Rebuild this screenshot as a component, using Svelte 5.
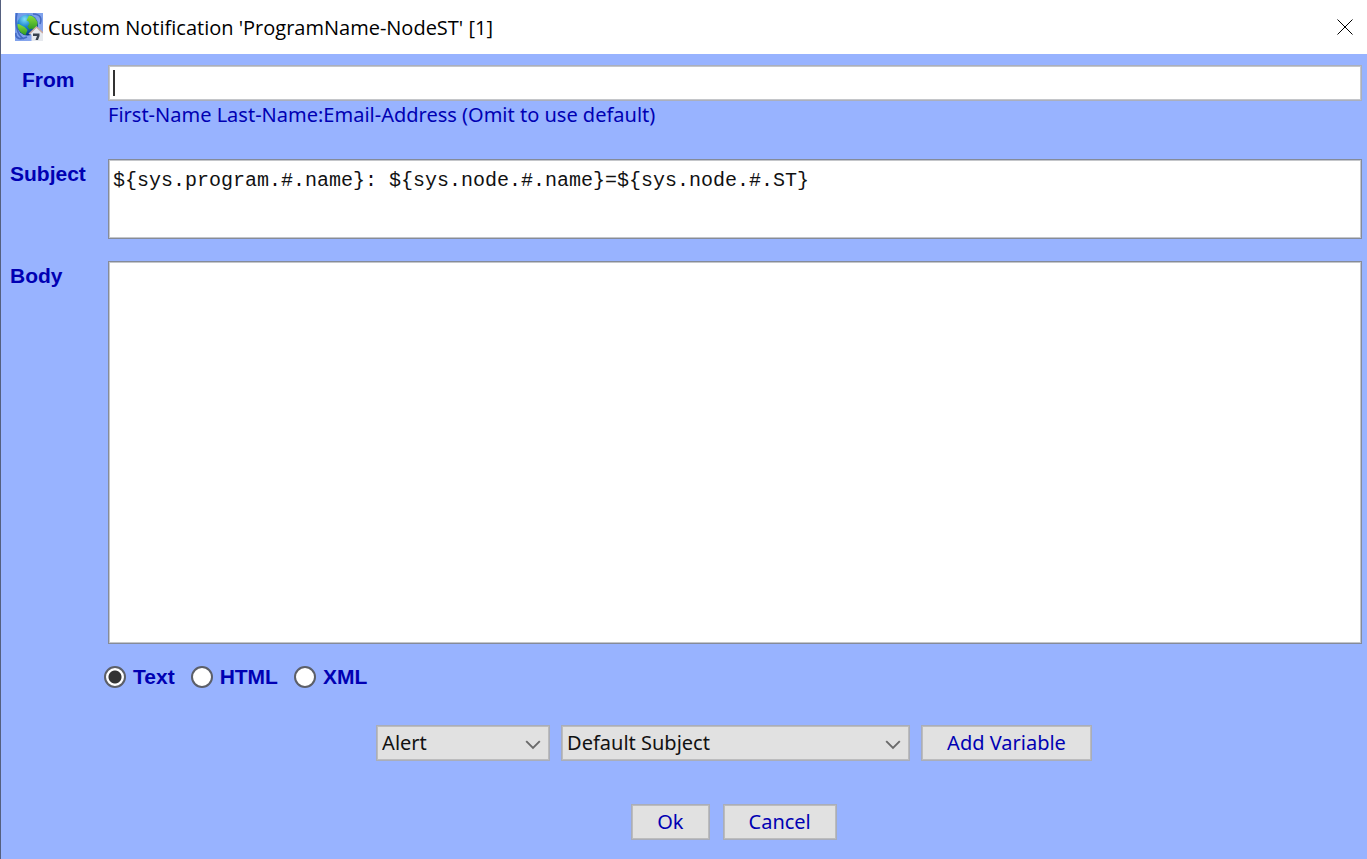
<script>
  let from = $state('');
  let subject = $state('${sys.program.#.name}: ${sys.node.#.name}=${sys.node.#.ST}');
  let body = $state('');
  let format = $state('Text');
  let category = $state('Alert');
  let variable = $state('Default Subject');
  const formats = ['Text', 'HTML', 'XML'];
</script>

{#snippet chevron()}
  <svg class="chevron" viewBox="0 0 16 10" aria-hidden="true">
    <path d="M1.2 1.2 8 8 14.8 1.2" fill="none" stroke="#6a6a6a" stroke-width="1.9" />
  </svg>
{/snippet}

<main class="window">
  <header class="titlebar">
    <svg class="app-icon" viewBox="0 0 28 28" aria-hidden="true">
      <defs>
        <linearGradient id="sky" x1="0" y1="0" x2="1" y2="1">
          <stop offset="0" stop-color="#6f9aea" />
          <stop offset="1" stop-color="#8fa9ee" />
        </linearGradient>
        <radialGradient id="sea" cx=".36" cy=".22" r=".8">
          <stop offset="0" stop-color="#7fe0f8" />
          <stop offset=".45" stop-color="#1c83cf" />
          <stop offset="1" stop-color="#06337c" />
        </radialGradient>
        <linearGradient id="land" x1="0" y1="0" x2="0" y2="1">
          <stop offset="0" stop-color="#8be03d" />
          <stop offset="1" stop-color="#2f9a22" />
        </linearGradient>
      </defs>
      <rect width="28" height="28" fill="url(#sky)" />
      <path d="M2 0C0 8 1 22 9 26M18 1c8 0 9 5 7 10M1 20c-1 6 5 7 11 4" fill="none" stroke="#456bc4" stroke-width="1.6" />
      <circle cx="12.5" cy="12" r="10.500" fill="url(#sea)" />
      <path d="M14 2.500c4 0 7 3 8.500 7 0 3-1 5-3 7l-3-1-2 1-2-3 2-3-1-2-2-1z" fill="url(#land)" />
      <path d="M2.500 11c3 0 4 2 7 3l3 3-2 5C6 21 2 16 2.500 11z" fill="url(#land)" />
      <path d="M14.500 21 21.500 14 28 20v8H16.500v-6z" fill="#e6e9ee" />
      <path d="m14 21 7.500-7 6.500 6" fill="none" stroke="#cba89e" stroke-width="1.400" />
      <path d="M18 20.500h6.500v2.500L23 27h-2.500l1.500-4h-4z" fill="#38424e" />
    </svg>
    <h1>Custom Notification 'ProgramName-NodeST' [1]</h1>
    <button class="close" type="button" aria-label="Close">
      <svg viewBox="0 0 16 16" aria-hidden="true">
        <path d="M.5.5l15 15M15.500.5l-15 15" stroke="#000" stroke-width="1" />
      </svg>
    </button>
  </header>

  <form onsubmit={(event) => event.preventDefault()}>
    <div class="fields">
      <label class="caption from-caption" for="from">From</label>
      <div class="from-cell">
        <div class="entry">
          <input id="from" type="text" bind:value={from} aria-describedby="from-hint" />
          {#if from === ''}<span class="caret"></span>{/if}
        </div>
        <p id="from-hint">First-Name Last-Name:Email-Address (Omit to use default)</p>
      </div>

      <label class="caption" for="subject">Subject</label>
      <textarea id="subject" class="subject" spellcheck="false" bind:value={subject}></textarea>

      <label class="caption" for="body">Body</label>
      <textarea id="body" spellcheck="false" bind:value={body}></textarea>
    </div>

    <div class="formats" role="radiogroup" aria-label="Format">
      {#each formats as name}
        <label><input type="radio" name="format" value={name} bind:group={format} />{name}</label>
      {/each}
    </div>

    <div class="actions variables">
      <div class="picker">
        <select aria-label="Category" bind:value={category}>
          <option>Alert</option>
        </select>
        {@render chevron()}
      </div>
      <div class="picker wide">
        <select aria-label="Variable" bind:value={variable}>
          <option>Default Subject</option>
        </select>
        {@render chevron()}
      </div>
      <button class="push" type="button">Add Variable</button>
    </div>

    <div class="actions confirm">
      <button class="push" type="submit">Ok</button>
      <button class="push" type="button">Cancel</button>
    </div>
  </form>
</main>

<style>
  :global(body) {
    margin: 0;
  }

  * {
    box-sizing: border-box;
  }

  .window {
    display: flex;
    flex-direction: column;
    min-height: 100vh;
    border-left: 1px solid #55607f;
    background: #98b3ff;
    color: #0000b3;
    font: 20px/28px "Noto Sans", sans-serif;
  }

  .titlebar {
    display: flex;
    align-items: center;
    height: 54px;
    padding: 0 14px;
    background: #fff;
    color: #000;
  }

  .app-icon {
    width: 28px;
    height: 28px;
    margin-right: 5px;
  }

  h1 {
    flex: 1;
    margin: 0;
    padding-top: 2px;
    font: 20px/28px "Open Sans", sans-serif;
  }

  .close {
    display: flex;
    padding: 0;
    border: 0;
    background: none;
  }

  .close svg {
    width: 16px;
    height: 16px;
  }

  form {
    flex: 1;
    display: flex;
    flex-direction: column;
    padding: 11px 5px 19px 0;
  }

  .fields {
    flex: 1;
    display: grid;
    grid-template-columns: 98px 1fr;
    grid-template-rows: auto auto 1fr;
    row-gap: 22px;
    padding-left: 9px;
  }

  .caption,
  .formats {
    font: bold 21px/28px "Liberation Sans", Arial, sans-serif;
  }

  .caption {
    padding-top: 1px;
  }

  .from-caption {
    padding-left: 12px;
  }

  .from-cell {
    padding-bottom: 8px;
  }

  .entry {
    position: relative;
  }

  .entry input,
  textarea {
    display: block;
    width: 100%;
    margin: 0;
    border: 1px solid #858b98;
    border-radius: 0;
    outline: 0;
    box-shadow: inset 0 0 0 1px #c4c6ca;
    background: #fff;
    color: #111;
    font: 20px/26px "Liberation Mono", "Courier New", monospace;
    resize: none;
  }

  .entry input {
    height: 36px;
    padding: 4px;
    border-color: #abafbc;
  }

  .caret {
    position: absolute;
    top: 5px;
    left: 5px;
    width: 2px;
    height: 26px;
    background: #333;
    pointer-events: none;
  }

  #from-hint {
    margin: 0;
  }

  textarea {
    height: 100%;
    padding: 8px 4px;
  }

  .subject {
    height: 80px;
  }

  .formats {
    display: flex;
    gap: 16px;
    margin: 19px 0 0 103px;
  }

  .formats label {
    display: flex;
    align-items: center;
    gap: 7px;
  }

  .formats input {
    appearance: none;
    width: 22px;
    height: 22px;
    margin: 0;
    border: 2px solid #5c5f68;
    border-radius: 50%;
    background: #fff;
  }

  .formats input:checked {
    background: radial-gradient(circle, #333 6px, #fff 7px);
  }

  .actions {
    display: flex;
    justify-content: center;
    padding-left: 105px;
  }

  .variables {
    gap: 11px;
    margin-top: 34px;
  }

  .confirm {
    gap: 13px;
    margin-top: 43px;
  }

  .picker {
    position: relative;
    width: 174px;
  }

  .wide {
    width: 349px;
  }

  select,
  .push {
    height: 36px;
    margin: 0;
    border: 1px solid #a9adb9;
    border-radius: 0;
    box-shadow: inset 0 0 0 1px #bcbcbd;
    background: #e1e1e1;
    font: 20px/28px "Noto Sans", sans-serif;
  }

  select {
    appearance: none;
    width: 100%;
    padding: 0 32px 0 5px;
    color: #111;
  }

  .push {
    padding: 0 25px;
    color: #0000b3;
  }

  .chevron {
    position: absolute;
    top: 15px;
    right: 9px;
    width: 16px;
    height: 10px;
    pointer-events: none;
  }
</style>
